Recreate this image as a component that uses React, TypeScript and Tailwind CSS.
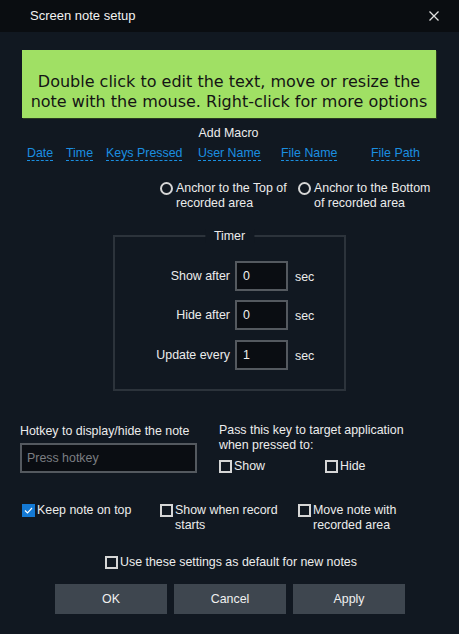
import React from "react";

const Box = ({ checked = false }: { checked?: boolean }) =>
  checked ? (
    <span className="flex h-[13px] w-[13px] shrink-0 items-center justify-center bg-[#1479d4]">
      <svg width="11" height="11" viewBox="0 0 11 11">
        <polyline points="2,5.5 4.5,8 9,3" fill="none" stroke="#ffffff" strokeWidth="1.2" />
      </svg>
    </span>
  ) : (
    <span className="block h-[13px] w-[13px] shrink-0 border-2 border-[#d6d6d6]" />
  );

const Radio = () => (
  <span className="mt-[1px] block h-[13px] w-[13px] shrink-0 rounded-full border-2 border-[#d6d6d6]" />
);

const Link = ({ children }: { children: React.ReactNode }) => (
  <span className="border-b border-dashed border-[#1b8fe0] text-[#1b8fe0]">{children}</span>
);

const TimerRow = ({ label, value, className = "" }: { label: string; value: string; className?: string }) => (
  <div className={"flex h-[30px] items-center " + className}>
    <div className="w-[115px] text-right">{label}</div>
    <div className="ml-[5px] flex h-[30px] w-[53px] items-center border-2 border-[#54595f] bg-[#0a0d12] pl-[6px] text-[#f0f0f0]">
      {value}
    </div>
    <div className="ml-[7px] pt-[2px]">sec</div>
  </div>
);

export default function App() {
  return (
    <div
      className="flex h-[634px] w-[459px] flex-col overflow-hidden bg-[#111821] text-[12.4px] leading-[14px] text-[#ececec]"
      style={{ fontFamily: '"Liberation Sans", Arial, sans-serif' }}
    >
      {/* Title bar */}
      <div className="flex h-[32px] shrink-0 items-center justify-between bg-[#0a0d11] pl-[30px] pr-[19px]">
        <span className="text-[13px] text-[#f2f2f2]">Screen note setup</span>
        <svg width="12" height="12" viewBox="0 0 12 12">
          <path d="M1.5 1.5 L10.5 10.5 M10.5 1.5 L1.5 10.5" stroke="#e0e0e0" strokeWidth="1.3" />
        </svg>
      </div>

      {/* Green note */}
      <div
        className="ml-[22px] mt-[18px] h-[68px] w-[414px] shrink-0 bg-[#a0e064] pt-[22px] text-center text-[16px] leading-[20px] text-[#141414] shadow-[1px_1px_0_#2a3a20]"
        style={{ fontFamily: '"DejaVu Sans", Verdana, sans-serif' }}
      >
        Double click to edit the text, move or resize the
        <br />
        note with the mouse. Right-click for more options
      </div>

      {/* Add Macro */}
      <div className="mt-[8px] pr-[2px] text-center">Add Macro</div>

      {/* Links */}
      <div className="mt-[6px] flex pl-[27px]">
        <div className="w-[39px]">
          <Link>Date</Link>
        </div>
        <div className="w-[40px]">
          <Link>Time</Link>
        </div>
        <div className="w-[92px]">
          <Link>Keys Pressed</Link>
        </div>
        <div className="w-[83px]">
          <Link>User Name</Link>
        </div>
        <div className="w-[90px]">
          <Link>File Name</Link>
        </div>
        <div>
          <Link>File Path</Link>
        </div>
      </div>

      {/* Anchors */}
      <div className="mt-[21px] flex pl-[160px] leading-[15px]">
        <div className="flex w-[138px] gap-[3px]">
          <Radio />
          <span>
            Anchor to the Top of
            <br />
            recorded area
          </span>
        </div>
        <div className="flex gap-[3px]">
          <Radio />
          <span>
            Anchor to the Bottom
            <br />
            of recorded area
          </span>
        </div>
      </div>

      {/* Timer group */}
      <div className="relative ml-[113px] mt-[24px] h-[156px] w-[233px] shrink-0 border-2 border-[#2c333b] pt-[24px]">
        <div className="absolute left-1/2 top-[-8px] -translate-x-1/2 bg-[#111821] px-[9px]">Timer</div>
        <TimerRow label="Show after" value="0" />
        <TimerRow label="Hide after" value="0" className="mt-[9px]" />
        <TimerRow label="Update every" value="1" className="mt-[10px]" />
      </div>

      {/* Hotkey */}
      <div className="mt-[33px] flex pl-[20px]">
        <div className="w-[199px]">
          <div>Hotkey to display/hide the note</div>
          <div className="mt-[5px] flex h-[30px] w-[177px] items-center border-2 border-[#54595f] bg-[#0a0d12] pl-[5px] text-[#7b7e82]">
            Press hotkey
          </div>
        </div>
        <div className="-mt-[1px]">
          <div className="leading-[15px]">
            Pass this key to target application
            <br />
            when pressed to:
          </div>
          <div className="mt-[6px] flex">
            <div className="flex w-[106px] items-center gap-[2px]">
              <Box />
              <span>Show</span>
            </div>
            <div className="flex items-center gap-[2px]">
              <Box />
              <span>Hide</span>
            </div>
          </div>
        </div>
      </div>

      {/* Options */}
      <div className="mt-[30px] flex leading-[15px]">
        <div className="ml-[22px] flex w-[138px] items-start gap-[2px]">
          <span className="mt-[1px]">
            <Box checked />
          </span>
          <span>Keep note on top</span>
        </div>
        <div className="flex w-[138px] items-start gap-[2px]">
          <span className="mt-[1px]">
            <Box />
          </span>
          <span>
            Show when record
            <br />
            starts
          </span>
        </div>
        <div className="flex items-start gap-[2px]">
          <span className="mt-[1px]">
            <Box />
          </span>
          <span>
            Move note with
            <br />
            recorded area
          </span>
        </div>
      </div>

      {/* Default */}
      <div className="mt-[22px] flex items-start gap-[2px] pl-[105px] leading-[15px]">
        <span className="mt-[1px]">
          <Box />
        </span>
        <span>Use these settings as default for new notes</span>
      </div>

      {/* Buttons */}
      <div className="mt-[14px] flex gap-[7px] pl-[55px] text-[#f0f0f0]">
        <div className="flex h-[30px] w-[112px] items-center justify-center bg-[#3e464f]">OK</div>
        <div className="flex h-[30px] w-[112px] items-center justify-center bg-[#3e464f]">Cancel</div>
        <div className="flex h-[30px] w-[112px] items-center justify-center bg-[#3e464f]">Apply</div>
      </div>
    </div>
  );
}
